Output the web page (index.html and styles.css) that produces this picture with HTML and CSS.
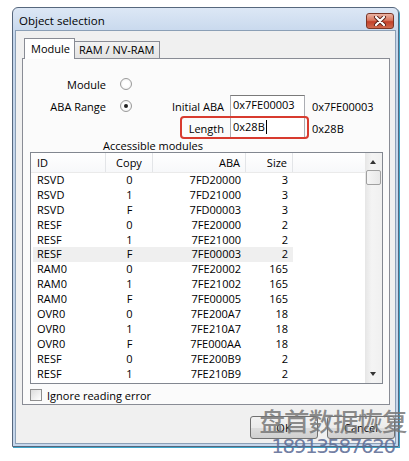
FILE: index.html
```html
<!DOCTYPE html>
<html>
<head>
<meta charset="utf-8">
<link rel="stylesheet" href="styles.css">
</head>
<body>
<div class="window">
  <div class="titlebar">
    <span class="title">Object selection</span>
    <span class="close"><svg width="14" height="10" viewBox="0 0 14 10"><path d="M3 1 L11 9 M11 1 L3 9" stroke="#5a2018" stroke-width="4" stroke-linecap="round"/><path d="M3 1 L11 9 M11 1 L3 9" stroke="#fff" stroke-width="2.2" stroke-linecap="round"/></svg></span>
  </div>
  <div class="client">
    <div class="tabs">
      <div class="tab active">Module</div>
      <div class="tab">RAM / NV-RAM</div>
    </div>
    <div class="panel">
      <div class="form">
        <div class="lbl">Module</div>
        <div class="radio"></div>
        <div></div><div></div><div></div>
        <div class="lbl">ABA Range</div>
        <div class="radio checked"></div>
        <div class="lbl2">Initial ABA</div>
        <div class="input">0x7FE00003</div>
        <div class="val">0x7FE00003</div>
        <div></div>
        <div></div>
        <div class="lbl2">Length</div>
        <div class="input">0x28B<span class="caret"></span></div>
        <div class="val">0x28B</div>
      </div>
      <div class="highlight"></div>
      <div class="caption">Accessible modules</div>
      <div class="listbox">
        <div class="listmain">
          <div class="row header">
            <div class="c-id">ID</div><div class="c-copy">Copy</div><div class="c-aba">ABA</div><div class="c-size">Size</div><div class="c-rest"></div>
          </div>
          <div class="row"><div class="c-id">RSVD</div><div class="c-copy">0</div><div class="c-aba">7FD20000</div><div class="c-size">3</div></div>
          <div class="row"><div class="c-id">RSVD</div><div class="c-copy">1</div><div class="c-aba">7FD21000</div><div class="c-size">3</div></div>
          <div class="row"><div class="c-id">RSVD</div><div class="c-copy">F</div><div class="c-aba">7FD00003</div><div class="c-size">3</div></div>
          <div class="row"><div class="c-id">RESF</div><div class="c-copy">0</div><div class="c-aba">7FE20000</div><div class="c-size">2</div></div>
          <div class="row"><div class="c-id">RESF</div><div class="c-copy">1</div><div class="c-aba">7FE21000</div><div class="c-size">2</div></div>
          <div class="row sel"><div class="c-id">RESF</div><div class="c-copy">F</div><div class="c-aba">7FE00003</div><div class="c-size">2</div></div>
          <div class="row"><div class="c-id">RAM0</div><div class="c-copy">0</div><div class="c-aba">7FE20002</div><div class="c-size">165</div></div>
          <div class="row"><div class="c-id">RAM0</div><div class="c-copy">1</div><div class="c-aba">7FE21002</div><div class="c-size">165</div></div>
          <div class="row"><div class="c-id">RAM0</div><div class="c-copy">F</div><div class="c-aba">7FE00005</div><div class="c-size">165</div></div>
          <div class="row"><div class="c-id">OVR0</div><div class="c-copy">0</div><div class="c-aba">7FE200A7</div><div class="c-size">18</div></div>
          <div class="row"><div class="c-id">OVR0</div><div class="c-copy">1</div><div class="c-aba">7FE210A7</div><div class="c-size">18</div></div>
          <div class="row"><div class="c-id">OVR0</div><div class="c-copy">F</div><div class="c-aba">7FE000AA</div><div class="c-size">18</div></div>
          <div class="row"><div class="c-id">RESF</div><div class="c-copy">0</div><div class="c-aba">7FE200B9</div><div class="c-size">2</div></div>
          <div class="row"><div class="c-id">RESF</div><div class="c-copy">1</div><div class="c-aba">7FE210B9</div><div class="c-size">2</div></div>
        </div>
        <div class="scrollbar">
          <div class="arrow up"></div>
          <div class="thumb"></div>
          <div class="track"></div>
          <div class="arrow down"></div>
        </div>
      </div>
      <div class="checkrow"><span class="checkbox"></span>Ignore reading error</div>
    </div>
    <div class="buttons">
      <div class="btn">OK</div>
      <div class="btn">Cancel</div>
    </div>
  </div>
  <div class="watermark">
    <div class="wm-cn">盘首数据恢复</div>
    <div class="wm-num">18913587620</div>
  </div>
</div>
</body>
</html>
```
FILE: styles.css
```css
* { box-sizing: border-box; }
html, body { margin: 0; padding: 0; background: #fff; }
body {
  font-family: "Open Sans", "Noto Sans", sans-serif;
  font-size: 11px;
  color: #000;
  width: 409px;
  height: 461px;
  overflow: hidden;
}
.window {
  position: relative;
  margin: 7px 0 0 12px;
  width: 387px;
  height: 440px;
  border: 1px solid #56677d;
  border-radius: 6px 6px 0 0;
  background: linear-gradient(#dce7f5, #c3d5eb 30px, #c6d7ec);
  box-shadow: 1px 1px 0 #3fa5c9;
  display: flex;
  flex-direction: column;
}
.titlebar {
  height: 22px;
  display: flex;
  align-items: center;
  justify-content: space-between;
  padding: 0 4px 0 6px;
}
.title { font-size: 11.5px; color: #000; margin-top: 2px; }
.close {
  width: 28px;
  height: 16px;
  margin-top: 3px;
  border: 1px solid #7b3526;
  border-radius: 3px;
  background: linear-gradient(#eab3a4, #d9775f 45%, #c2402a 55%, #cf6a4f);
  display: flex;
  align-items: center;
  justify-content: center;
}
.client {
  flex: 1;
  margin: 0 2px 2px 2px;
  background: #f0f0f0;
  border: 1px solid #8b9fb6;
  padding: 7px 0 0 6px;
  display: flex;
  flex-direction: column;
}
.tabs { display: flex; align-items: flex-end; height: 20px; margin-left: 2px; }
.tab {
  height: 17px;
  padding: 0 5px 0 4px;
  border: 1px solid #898c95;
  border-bottom: none;
  border-left: none;
  background: linear-gradient(#f2f2f2, #e3e3e3);
  line-height: 16px;
}
.tab.active {
  height: 21px;
  width: 51px;
  padding: 0 6px;
  border-left: 1px solid #898c95;
  background: #fff;
  margin-bottom: -1px;
  position: relative;
  z-index: 1;
  line-height: 19px;
}
.panel {
  position: relative;
  width: 368px;
  height: 347px;
  border: 1px solid #898c95;
  background: #fbfbfb;
  padding: 14px 0 0 0;
}
.form {
  display: grid;
  grid-template-columns: 83px 14px 12px 92px 6px 75px 7px auto;
  grid-template-rows: 22px 22px 22px;
  align-items: center;
}
.form > .lbl { text-align: right; grid-column: 1; }
.form > .radio { grid-column: 3; }
.form > .lbl2 { grid-column: 4; text-align: right; }
.form > .input { grid-column: 6; }
.form > .val { grid-column: 8; }
.radio {
  width: 12px; height: 12px;
  border-radius: 50%;
  border: 1px solid #9a9a9a;
  background: radial-gradient(circle, #fff 40%, #e8e8e8);
  position: relative;
}
.radio.checked::after {
  content: "";
  position: absolute;
  left: 3px; top: 3px;
  width: 4px; height: 4px;
  border-radius: 50%;
  background: #222;
}
.input {
  height: 22px;
  border: 1px solid #abadb3;
  border-top-color: #7a7a7a;
  background: #fff;
  padding: 0 0 0 2px;
  line-height: 18px;
  white-space: nowrap;
}
.caret { display: inline-block; width: 1px; height: 14px; background: #000; vertical-align: -3px; margin-left: 1px; }
.highlight {
  position: absolute;
  left: 157px;
  top: 57px;
  width: 129px;
  height: 23px;
  border: 2px solid #d83b2f;
  border-radius: 4px;
}
.caption { margin: 0 0 0 80px; line-height: 13px; height: 13px; }
.listbox {
  margin: 0 0 0 7px;
  width: 353px;
  height: 232px;
  border: 1px solid #828790;
  background: #fff;
  display: flex;
}
.listmain { flex: 1; overflow: hidden; padding-left: 2px; }
.row { display: flex; height: 14.9px; line-height: 14.9px; width: 260px; }
.row.sel { background: #efefef; }
.row.header {
  height: 20px;
  line-height: 19px;
  width: auto;
  margin-left: -2px;
  padding-left: 2px;
  background: linear-gradient(#fff, #f7f8fa);
  border-bottom: 1px solid #eaeaea;
}
.c-id { width: 73px; padding-left: 4px; }
.c-copy { width: 47px; text-align: center; }
.c-aba { width: 93px; text-align: right; padding-right: 5px; }
.c-size { width: 47px; text-align: right; padding-right: 5px; }
.header .c-id, .header .c-copy, .header .c-aba, .header .c-size { border-right: 1px solid #e3e5e8; }
.c-rest { flex: 1; }
.scrollbar {
  width: 17px;
  background: linear-gradient(90deg, #e6e6e6, #f4f4f4 40%, #f0f0f0);
  display: flex;
  flex-direction: column;
  align-items: center;
}
.arrow { height: 17px; width: 17px; position: relative; }
.arrow::after {
  content: "";
  position: absolute;
  left: 5px;
  border-left: 3.5px solid transparent;
  border-right: 3.5px solid transparent;
}
.arrow.up::after { top: 7px; border-bottom: 4px solid #333; }
.arrow.down::after { top: 6px; border-top: 4px solid #333; }
.thumb {
  width: 15px;
  height: 15px;
  border: 1px solid #a0a0a0;
  border-radius: 2px;
  background: linear-gradient(90deg, #f5f5f5, #e8e8e8);
}
.track { flex: 1; }
.checkrow {
  display: flex;
  align-items: center;
  margin: 3px 0 0 7px;
  height: 16px;
}
.checkbox {
  width: 12px; height: 12px;
  border: 1px solid #8f8f8f;
  background: linear-gradient(135deg, #dcdcdc, #fff);
  margin-right: 5px;
}
.buttons {
  display: flex;
  gap: 9px;
  margin: 11px 0 0 228px;
}
.btn {
  width: 69px;
  height: 23px;
  border: 1px solid #707070;
  border-radius: 3px;
  background: linear-gradient(#f2f2f2, #ebebeb 50%, #dddddd 51%, #cfcfcf);
  text-align: center;
  line-height: 21px;
}
.watermark {
  position: absolute;
  left: 243px;
  top: 395px;
  width: 154px;
  text-align: center;
  pointer-events: none;
}
.wm-cn {
  font-family: "Noto Sans CJK SC", sans-serif;
  font-size: 25.5px;
  line-height: 33px;
  color: rgba(120,120,120,0.85);
  letter-spacing: -1px;
  font-weight: 500;
}
.wm-num {
  font-family: "DejaVu Sans", sans-serif;
  font-size: 20px;
  line-height: 20px;
  color: rgba(95,110,150,0.9);
  letter-spacing: -1.5px;
}
```
